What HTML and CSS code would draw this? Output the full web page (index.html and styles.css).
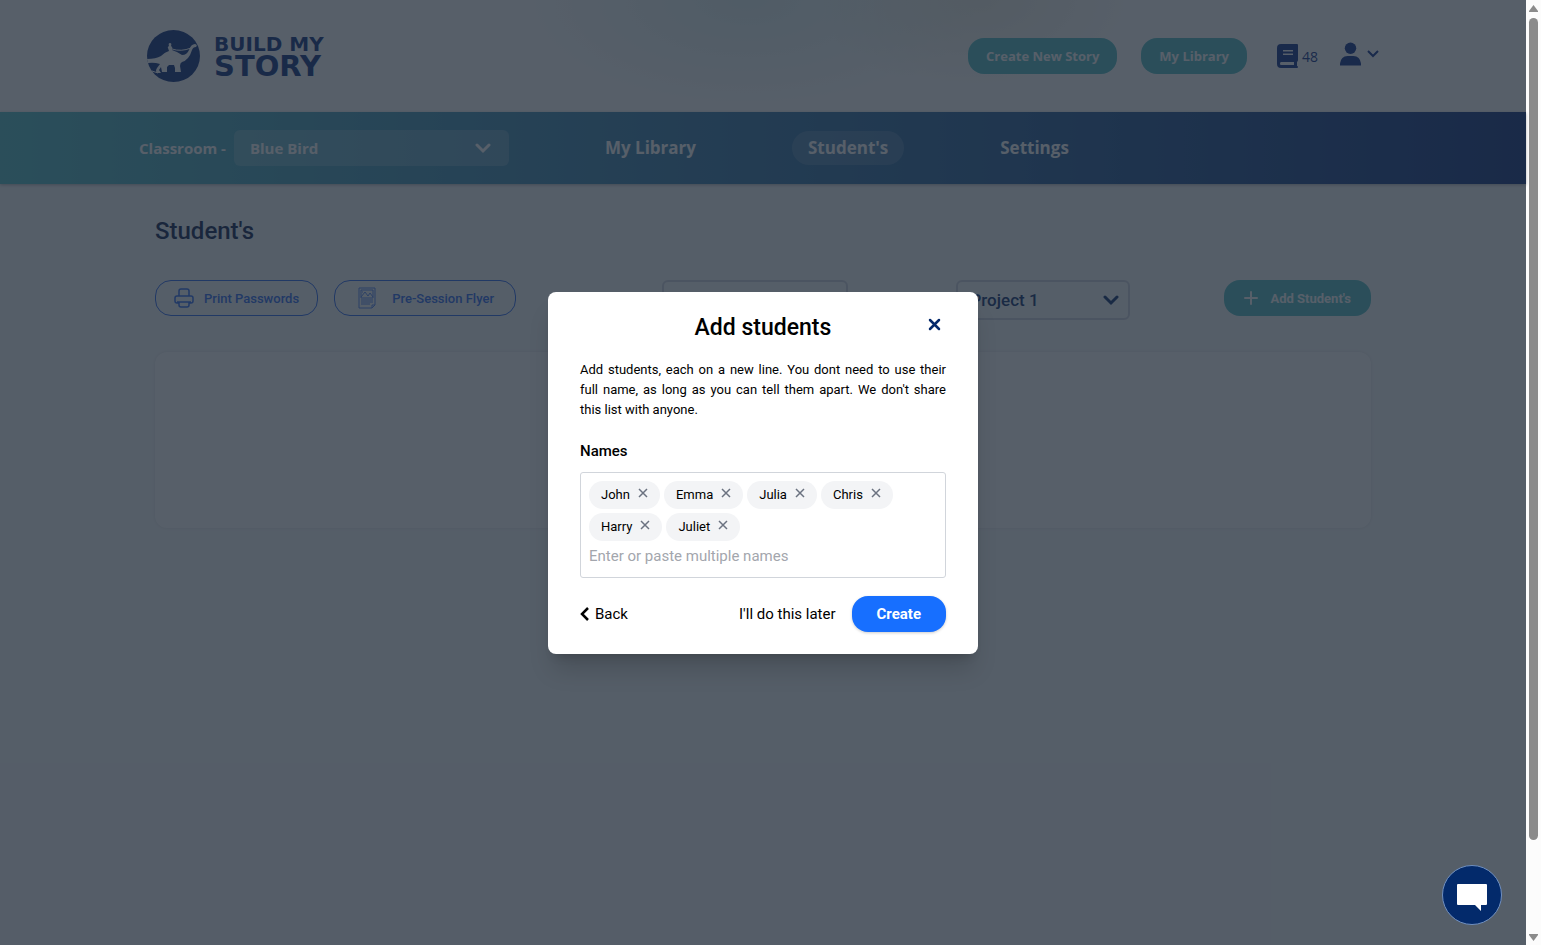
FILE: index.html
```html
<!DOCTYPE html>
<html lang="en">
<head>
    <meta charset="UTF-8">
    <meta name="viewport" content="width=device-width, initial-scale=1.0">
    <title>Build My Story - Student's</title>
    <link rel="stylesheet" href="styles.css">
</head>
<body>
    <div class="page">
        <!-- Header -->
        <header class="header">
            <div class="header-inner">
                <a href="#" class="logo">
                    <svg width="53" height="52" viewBox="0 0 53 52">
                        <ellipse cx="26.500" cy="26" rx="26.500" ry="26" fill="#0b2d7c"/>
                        <path fill="#fff" d="M0 29Q9 29 14 26Q18 22 22 21L21 18Q20 17 22 16Q21 13 23 13Q25 13 24 16Q26 17 25 20Q31 22 35 25Q40 25 42 20Q44 14 48 14Q51 15 49 17Q46 17 45 20Q42 30 35 32Q33 33 33 36L34 42H28V38L27 35H22L20 37L20 42H15L14 37L12 40L14 43H10Q8 41 10 38L13 34Q7 32 1 33Z"/>
                        <path fill="none" stroke="#fff" d="M25 19Q34 22 44 18M5 41L11 43"/>
                    </svg>
                    <span class="logo-text">
                        <span class="logo-top">BUILD MY</span>
                        <span class="logo-bottom">STORY</span>
                    </span>
                </a>
                <div class="header-actions">
                    <button class="btn-teal">Create New Story</button>
                    <button class="btn-teal">My Library</button>
                    <div class="credits">
                        <svg width="21" height="24" viewBox="0 0 21 24">
                            <path fill="#0b2d87" fill-rule="evenodd" d="M4 0H20Q21 0 21 1V16Q21 17 20 18V22Q21 22 21 23Q21 24 20 24H4Q0 24 0 20V4Q0 0 4 0ZM4 18Q3 18 3 19.500Q3 21 4 21H17V18ZM6 6V7.500H16V6ZM6 9.500V11H16V9.500Z"/>
                        </svg>
                        <span>48</span>
                    </div>
                    <button class="account" aria-label="Account">
                        <svg width="21" height="24" viewBox="0 0 22 24" fill="#0b2d87">
                            <circle cx="11" cy="6" r="6"/>
                            <path d="M0 24V22Q1 14 8 14H14Q21 14 22 22V24Z"/>
                        </svg>
                        <svg width="12" height="8" viewBox="0 0 12 8" fill="none" stroke="#0b2d87" stroke-width="2">
                            <path d="M1 1L6 6L11 1"/>
                        </svg>
                    </button>
                </div>
            </div>
        </header>

        <!-- Classroom nav -->
        <nav class="nav">
            <div class="nav-inner">
                <div class="classroom">
                    <label for="classroom">Classroom -</label>
                    <div class="select-wrap">
                        <select id="classroom" class="classroom-select">
                            <option>Blue Bird</option>
                        </select>
                        <svg class="chevron" width="16" height="11" viewBox="0 0 16 11" fill="none" stroke="#fff" stroke-width="3" stroke-linecap="round">
                            <path d="M2 2L8 8L14 2"/>
                        </svg>
                    </div>
                </div>
                <a href="#" class="nav-link">My Library</a>
                <a href="#" class="nav-link active">Student's</a>
                <a href="#" class="nav-link">Settings</a>
            </div>
        </nav>

        <!-- Content -->
        <main class="content">
            <h1>Student's</h1>
            <div class="toolbar">
                <div class="toolbar-left">
                    <button class="btn-outline">
                        <svg width="20" height="20" viewBox="0 0 20 20" fill="none" stroke="#2a69f0" stroke-width="1.500" stroke-linejoin="round">
                            <path d="M5 8V3Q5 1 7 1H13Q15 1 15 3V8M5 15H3Q1 15 1 13V10Q1 8 3 8H17Q19 8 19 10V13Q19 15 17 15H15M5 14H15V17Q15 19 13 19H7Q5 19 5 17ZM3 14H17"/>
                        </svg>
                        Print Passwords
                    </button>
                    <button class="btn-outline btn-flyer">
                        <svg width="18" height="22" viewBox="0 0 18 22" fill="none" stroke="#2a69f0" stroke-width="1" opacity="0.8">
                            <path d="M1 1H17V18L14 21H1ZM17 18H14V21M3 3H15V11H3ZM3 10L7 5L10 9L12 6L15 10M4 5H5M3 13H15M3 15H15M3 17H12"/>
                        </svg>
                        Pre-Session Flyer
                    </button>
                </div>
                <div class="toolbar-selects">
                    <select class="box-select" aria-label="Group">
                        <option></option>
                    </select>
                    <div class="select-wrap">
                        <select class="box-select box-project" aria-label="Project">
                            <option>Project 1</option>
                        </select>
                        <svg class="chevron chevron-box" width="16" height="11" viewBox="0 0 16 11" fill="none" stroke="#0b2d6c" stroke-width="3" stroke-linecap="round">
                            <path d="M2 2L8 8L14 2"/>
                        </svg>
                    </div>
                </div>
                <button class="btn-teal btn-add">
                    <svg width="14" height="14" viewBox="0 0 14 14" stroke="#fff" stroke-width="2" stroke-linecap="round">
                        <path d="M7 1V13M1 7H13"/>
                    </svg>
                    Add Student's
                </button>
            </div>
            <div class="card"></div>
        </main>

        <!-- Add students modal -->
        <div class="overlay">
            <div class="modal" role="dialog" aria-labelledby="modal-title">
                <div class="modal-head">
                    <h2 id="modal-title">Add students</h2>
                    <button class="close" aria-label="Close">
                        <svg width="13" height="13" viewBox="0 0 13 13" stroke="#03286b" stroke-width="2.500" stroke-linecap="round">
                            <path d="M2 2L11 11M11 2L2 11"/>
                        </svg>
                    </button>
                </div>
                <p class="modal-text">Add students, each on a new line. You dont need to use their full name, as long as you can tell them apart. We don't share this list with anyone.</p>
                <label class="names-label" for="names">Names</label>
                <div class="names-box">
                    <div class="tags">
                        <span class="tag">John <button aria-label="Remove John"><svg width="10" height="10" viewBox="0 0 10 10"><path d="M1 1L9 9M9 1L1 9"/></svg></button></span>
                        <span class="tag">Emma <button aria-label="Remove Emma"><svg width="10" height="10" viewBox="0 0 10 10"><path d="M1 1L9 9M9 1L1 9"/></svg></button></span>
                        <span class="tag">Julia <button aria-label="Remove Julia"><svg width="10" height="10" viewBox="0 0 10 10"><path d="M1 1L9 9M9 1L1 9"/></svg></button></span>
                        <span class="tag">Chris <button aria-label="Remove Chris"><svg width="10" height="10" viewBox="0 0 10 10"><path d="M1 1L9 9M9 1L1 9"/></svg></button></span>
                        <span class="tag">Harry <button aria-label="Remove Harry"><svg width="10" height="10" viewBox="0 0 10 10"><path d="M1 1L9 9M9 1L1 9"/></svg></button></span>
                        <span class="tag">Juliet <button aria-label="Remove Juliet"><svg width="10" height="10" viewBox="0 0 10 10"><path d="M1 1L9 9M9 1L1 9"/></svg></button></span>
                    </div>
                    <input type="text" id="names" placeholder="Enter or paste multiple names">
                </div>
                <div class="modal-footer">
                    <button class="btn-text btn-back">
                        <svg width="10" height="14" viewBox="0 0 10 14" fill="none" stroke="#000" stroke-width="2.500">
                            <path d="M8 1L2 7L8 13"/>
                        </svg>
                        Back
                    </button>
                    <button class="btn-text">I'll do this later</button>
                    <button class="btn-create">Create</button>
                </div>
            </div>
        </div>

        <button class="chat" aria-label="Chat">
            <svg width="30" height="27" viewBox="0 0 30 27" fill="#fff">
                <path d="M1 0H29Q30 0 30 1V20Q30 21 29 21H24V27L18 21H1Q0 21 0 20V1Q0 0 1 0Z"/>
            </svg>
        </button>
    </div>

    <!-- Scroll track -->
    <div class="scroll">
        <svg width="9" height="7" viewBox="0 0 9 7" fill="#8b8b8b"><path d="M4.500 0L9 6V7H0V6Z"/></svg>
        <div class="thumb"></div>
        <svg width="9" height="7" viewBox="0 0 9 7" fill="#8b8b8b"><path d="M0 0H9V1L4.500 7L0 1Z"/></svg>
    </div>
</body>
</html>
```
FILE: styles.css
```css
* {
    box-sizing: border-box;
}
body {
    margin: 0;
    display: flex;
    height: 100vh;
    overflow: hidden;
    font-family: Roboto, Arial, sans-serif;
    color: #000;
}
button, input, select {
    font-family: inherit;
}
button {
    border: none;
    padding: 0;
    background: none;
    cursor: pointer;
}
svg {
    display: block;
    flex-shrink: 0;
}
a {
    text-decoration: none;
}
.page {
    position: relative;
    flex: 1;
    background-color: #f7f9fa;
}

/* Header */
.header {
    background: radial-gradient(ellipse 230px 110px at 49% 0, rgba(110, 190, 190, 0.2), transparent), radial-gradient(ellipse 160px 90px at 64% 0, rgba(190, 190, 150, 0.25), transparent), #fff;
    padding: 0 24px;
    font-family: "Open Sans", "Segoe UI", sans-serif;
}
.header-inner {
    display: flex;
    justify-content: space-between;
    align-items: center;
    max-width: 1232px;
    height: 112px;
    margin: 0 auto;
}
.logo {
    display: flex;
    align-items: center;
    gap: 14px;
    color: #0b2d7c;
    font-family: "DejaVu Sans", sans-serif;
    font-weight: bold;
}
.logo-text {
    display: flex;
    flex-direction: column;
}
.logo-top {
    font-size: 20px;
    line-height: 20px;
}
.logo-bottom {
    font-size: 29px;
    line-height: 24px;
}
.header-actions {
    display: flex;
    align-items: center;
    gap: 24px;
}
.btn-teal {
    height: 36px;
    padding: 0 18px;
    border-radius: 16px;
    background-color: #4fbdc3;
    color: #fff;
    font-size: 13px;
    font-weight: bold;
}
.credits {
    display: flex;
    align-items: center;
    gap: 4px;
    padding-left: 6px;
    color: #0b2d87;
    font-size: 14px;
}
.account {
    display: flex;
    align-items: center;
    gap: 6px;
    margin-left: -2px;
    padding-bottom: 4px;
}

/* Nav */
.nav {
    padding: 0 24px;
    background: linear-gradient(90deg, #4fbdc3, #3c88b0 35%, #0b2d7c);
    box-shadow: 0 1px 3px rgba(0, 0, 0, 0.3);
    font-family: "Open Sans", "Segoe UI", sans-serif;
    font-weight: bold;
    color: #fff;
}
.nav-inner {
    display: flex;
    align-items: center;
    gap: 80px;
    max-width: 1248px;
    height: 72px;
    margin: 0 auto;
}
.classroom {
    display: flex;
    align-items: center;
    gap: 8px;
    font-size: 15px;
}
.select-wrap {
    position: relative;
}
.classroom-select {
    display: block;
    appearance: none;
    width: 275px;
    height: 36px;
    padding: 0 16px;
    border: none;
    border-radius: 6px;
    background-color: rgba(255, 255, 255, 0.2);
    color: #fff;
    font-size: 15px;
    font-weight: bold;
}
.chevron {
    position: absolute;
    right: 18px;
    top: 13px;
    pointer-events: none;
}
.chevron-box {
    right: 11px;
    top: 15px;
}
.nav-link {
    padding: 5px 16px;
    border-radius: 17px;
    color: #fff;
    font-size: 17px;
    line-height: 24px;
}
.nav-link.active {
    background-color: rgba(255, 255, 255, 0.15);
}

/* Content */
.content {
    max-width: 1216px;
    margin: 0 auto;
    padding-top: 31px;
}
h1 {
    margin: 0 0 33px;
    font-size: 24px;
    line-height: 32px;
    font-weight: 500;
    color: #0b1c4c;
}
.toolbar {
    display: flex;
    align-items: flex-start;
    margin-bottom: 32px;
}
.toolbar-left {
    display: flex;
    gap: 16px;
}
.btn-outline {
    display: flex;
    align-items: center;
    gap: 10px;
    height: 36px;
    padding: 0 18px;
    border: 1px solid #2a69f0;
    border-radius: 16px;
    color: #2a69f0;
    font-size: 13px;
    font-weight: 500;
}
.btn-flyer {
    gap: 16px;
    padding: 0 21px 0 23px;
}
.toolbar-selects {
    display: flex;
    gap: 108px;
    margin-left: auto;
    margin-right: 94px;
}
.box-select {
    display: block;
    appearance: none;
    width: 186px;
    height: 40px;
    padding: 0 12px;
    border: 2px solid #d0d4de;
    border-radius: 6px;
    background-color: transparent;
    color: #0b2d6c;
    font-size: 17px;
    font-weight: 500;
}
.box-project {
    width: 174px;
}
.btn-add {
    display: flex;
    align-items: center;
    gap: 12px;
    padding: 0 20px;
}
.card {
    height: 176px;
    border-radius: 12px;
    background-color: #fff;
    box-shadow: 0 0 3px rgba(0, 0, 0, 0.1);
}

/* Modal */
.overlay {
    position: absolute;
    inset: 0;
    display: flex;
    align-items: center;
    justify-content: center;
    background-color: rgba(31, 41, 55, 0.75);
}
.modal {
    width: 430px;
    padding: 21px 32px 22px;
    border-radius: 8px;
    background-color: #fff;
    box-shadow: 0 20px 25px -5px rgba(0, 0, 0, 0.15), 0 8px 10px -6px rgba(0, 0, 0, 0.15);
}
.modal-head {
    position: relative;
    text-align: center;
}
h2 {
    margin: 0;
    font-size: 23px;
    line-height: 30px;
    font-weight: 500;
}
.close {
    position: absolute;
    top: 5px;
    right: 5px;
}
.modal-text {
    margin: 17px 0 21px;
    font-size: 13px;
    line-height: 20px;
    text-align: justify;
}
.names-label {
    display: block;
    margin-bottom: 11px;
    font-size: 15px;
    line-height: 20px;
    font-weight: 500;
}
.names-box {
    height: 106px;
    padding: 8px;
    border: 1px solid #d1d5db;
    border-radius: 3px;
}
.tags {
    display: flex;
    flex-wrap: wrap;
    gap: 4px;
}
.tag {
    display: flex;
    align-items: center;
    gap: 8px;
    height: 28px;
    padding: 0 12px;
    border-radius: 14px;
    background-color: #f3f4f6;
    font-size: 13px;
}
.tag button {
    padding-bottom: 3px;
}
.tag path {
    stroke: #6b7280;
    stroke-width: 1.5;
}
.names-box input {
    display: block;
    width: 100%;
    height: 30px;
    padding: 0;
    border: none;
    outline: none;
    font-size: 15px;
}
.names-box input::placeholder {
    color: #a3a6ad;
}
.modal-footer {
    display: flex;
    align-items: center;
    gap: 16px;
    margin-top: 18px;
}
.btn-text {
    font-size: 15px;
    color: #000;
}
.btn-back {
    display: flex;
    align-items: center;
    gap: 5px;
    margin-right: auto;
}
.btn-create {
    height: 36px;
    padding: 0 25px;
    border-radius: 16px;
    background-color: #176fff;
    box-shadow: 0 1px 3px rgba(0, 0, 0, 0.2);
    color: #fff;
    font-size: 15px;
    font-weight: bold;
}

/* Chat */
.chat {
    position: absolute;
    right: 24px;
    bottom: 20px;
    display: flex;
    align-items: center;
    justify-content: center;
    width: 60px;
    height: 60px;
    padding-top: 4px;
    border: 1px solid #6f8fc0;
    border-radius: 50%;
    background-color: #032a6b;
}

/* Scroll track */
.scroll {
    display: flex;
    flex-direction: column;
    align-items: center;
    width: 15px;
    padding: 5px 0 4px;
    background-color: #fcfcfc;
}
.thumb {
    flex: 1;
    width: 9px;
    margin: 6px 0 94px;
    border-radius: 5px;
    background-color: #8b8b8b;
}
```
